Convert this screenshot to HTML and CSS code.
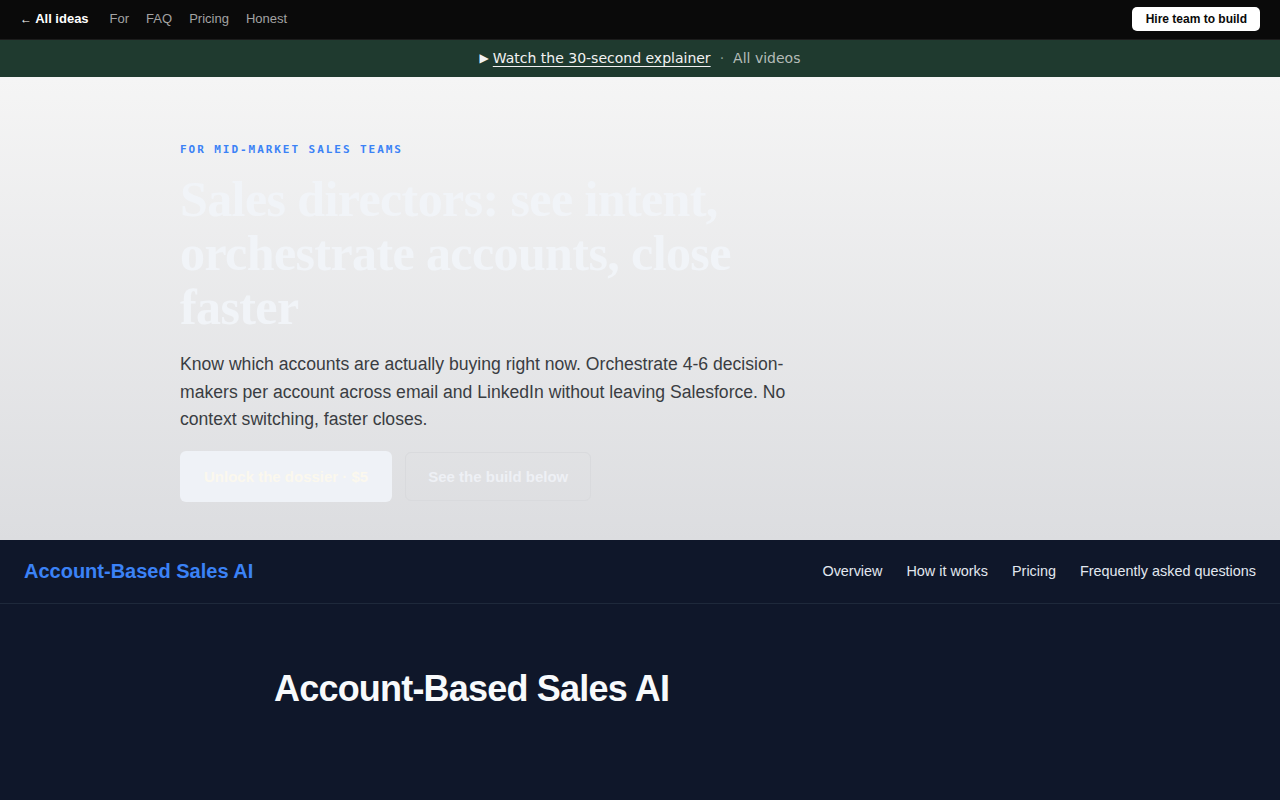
FILE: index.html
```html
<!DOCTYPE html>
<html lang="en">
<head>
  <meta charset="UTF-8">
  <meta name="viewport" content="width=device-width, initial-scale=1.0">
  <title>Account-Based Sales AI</title>
  <link rel="stylesheet" href="styles.css">
</head>
<body>
  <!-- Top bar -->
  <header class="topbar">
    <nav class="topbar-links">
      <a class="back" href="#"><span class="arrow">←</span> All ideas</a>
      <a href="#">For</a>
      <a href="#">FAQ</a>
      <a href="#">Pricing</a>
      <a href="#">Honest</a>
    </nav>
    <a class="hire" href="#">Hire team to build</a>
  </header>

  <!-- Video banner -->
  <div class="banner">
    <span class="play">▶</span>
    <a class="watch" href="#">Watch the 30-second explainer</a>
    <span class="dot">·</span>
    <a class="videos" href="#">All videos</a>
  </div>

  <!-- Hero -->
  <section class="hero">
    <div class="hero-inner">
      <p class="eyebrow">FOR MID-MARKET SALES TEAMS</p>
      <h1>Sales directors: see intent, orchestrate accounts, close faster</h1>
      <p class="lead">Know which accounts are actually buying right now. Orchestrate 4-6 decision-makers per account across email and LinkedIn without leaving Salesforce. No context switching, faster closes.</p>
      <div class="actions">
        <a class="btn btn-primary" href="#">Unlock the dossier · $5</a>
        <a class="btn btn-ghost" href="#">See the build below</a>
      </div>
    </div>
  </section>

  <!-- Product site -->
  <header class="site-nav">
    <a class="brand" href="#">Account-Based Sales AI</a>
    <nav class="site-links">
      <a href="#">Overview</a>
      <a href="#">How it works</a>
      <a href="#">Pricing</a>
      <a href="#">Frequently asked questions</a>
    </nav>
  </header>

  <main class="site-main">
    <h2>Account-Based Sales AI</h2>
  </main>
</body>
</html>
```

FILE: styles.css
```css
* {
  margin: 0;
  padding: 0;
  box-sizing: border-box;
}

body {
  font-family: 'Liberation Sans', Arial, sans-serif;
  background: #0f172a;
  min-height: 100vh;
}

a {
  text-decoration: none;
  color: inherit;
}

/* Top bar */
.topbar {
  height: 40px;
  background: #0a0a0a;
  border-bottom: 1px solid #1c1c1c;
  display: flex;
  align-items: center;
  justify-content: space-between;
  padding: 0 20px;
}

.topbar-links {
  display: flex;
  align-items: center;
  gap: 17px;
  font-size: 13px;
  color: #a3a3a3;
  margin-top: -2px;
}

.topbar-links .back {
  color: #fff;
  font-weight: bold;
  margin-right: 4px;
}

.topbar-links .arrow {
  font-weight: normal;
  font-size: 12px;
}

.hire {
  background: #fff;
  color: #0a0a0a;
  font-size: 12px;
  font-weight: bold;
  padding: 5px 13px 5px 14px;
  border-radius: 5px;
  line-height: 14px;
  margin-top: -2px;
}

/* Banner */
.banner {
  height: 37px;
  background: #1f3a2f;
  display: flex;
  align-items: center;
  justify-content: center;
  font-family: 'DejaVu Sans', sans-serif;
  font-size: 14px;
  color: #f2f2f2;
  padding-bottom: 2px;
}

.banner .play {
  font-size: 12px;
  margin-right: 4px;
}

.banner .watch {
  text-decoration: underline;
  text-underline-offset: 3px;
}

.banner .dot {
  color: #8a9a92;
  margin: 0 9px;
}

.banner .videos {
  color: #b4bcb8;
}

/* Hero */
.hero {
  height: 463px;
  background: linear-gradient(180deg, #f5f5f5 0%, #dcdde0 100%);
}

.hero-inner {
  width: 920px;
  margin: 0 auto;
  padding-top: 66px;
}

.eyebrow {
  font-family: 'DejaVu Sans Mono', monospace;
  font-weight: bold;
  font-size: 11px;
  letter-spacing: 1.95px;
  color: #3b82f6;
}

.hero h1 {
  font-family: 'Liberation Serif', 'Times New Roman', serif;
  font-size: 50px;
  line-height: 54px;
  font-weight: bold;
  color: #f1f4f8;
  max-width: 600px;
  margin-top: 16px;
  letter-spacing: -0.6px;
}

.lead {
  max-width: 620px;
  margin-top: 17px;
  font-size: 17.6px;
  line-height: 27.5px;
  color: #3a3d42;
}

.actions {
  display: flex;
  gap: 13px;
  margin-top: 17px;
}

.btn {
  display: inline-flex;
  align-items: center;
  justify-content: center;
  height: 51px;
  padding: 0 22px;
  border-radius: 6px;
  font-size: 15px;
  font-weight: bold;
}

.btn-primary {
  background: #eff2f7;
  color: #fbf8ee;
  padding: 0 24px;
}

.btn-ghost {
  border: 1px solid #d9dadd;
  color: #eef0f5;
  height: 49px;
  margin-top: 1px;
  padding: 0 22px;
}

/* Product site nav */
.site-nav {
  height: 64px;
  border-bottom: 1px solid #1e293b;
  display: flex;
  align-items: center;
  justify-content: space-between;
  padding: 0 24px 1px;
}

.brand {
  color: #3b82f6;
  font-size: 20px;
  font-weight: bold;
}

.site-links {
  display: flex;
  gap: 24px;
  font-size: 14.4px;
  color: #e2e8f0;
}

.site-main {
  width: 732px;
  margin: 0 auto;
  padding-top: 63px;
}

.site-main h2 {
  color: #f8fafc;
  font-size: 36px;
  line-height: 44px;
  letter-spacing: -0.8px;
}
```
